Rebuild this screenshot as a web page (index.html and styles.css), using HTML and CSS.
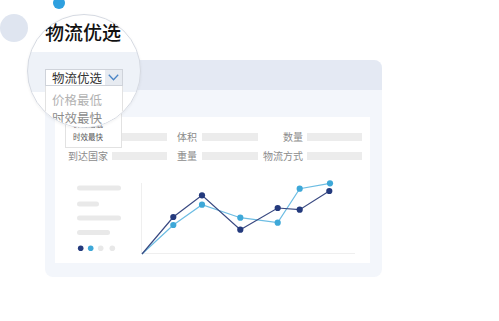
FILE: index.html
```html
<!DOCTYPE html>
<html lang="zh-CN">
<head>
    <meta charset="UTF-8">
    <meta name="viewport" content="width=device-width, initial-scale=1.0">
    <title>物流优选</title>
    <link rel="stylesheet" href="styles.css">
</head>
<body>
    <div class="scene">
        <span class="dot dot-blue"></span>
        <span class="dot dot-gray"></span>

        <div class="card">
            <div class="card-head"></div>
            <div class="card-body">
                <div class="panel">
                    <div class="form">
                        <span class="label"></span><span class="bar"></span>
                        <span class="label">体积</span><span class="bar bar-wide"></span>
                        <span class="label">数量</span><span class="bar"></span>

                        <span class="label">到达国家</span><span class="bar"></span>
                        <span class="label">重量</span><span class="bar bar-wide"></span>
                        <span class="label">物流方式</span><span class="bar"></span>
                    </div>

                    <svg class="chart" width="315" height="85" viewBox="55 175 315 85">
                        <!-- legend -->
                        <rect x="77" y="185.5" width="44" height="5" rx="2.5" fill="#e9e9e9"/>
                        <rect x="77" y="201.5" width="22" height="5" rx="2.5" fill="#e9e9e9"/>
                        <rect x="77" y="215.5" width="44" height="5" rx="2.5" fill="#e9e9e9"/>
                        <rect x="77" y="230" width="33" height="5" rx="2.5" fill="#e9e9e9"/>
                        <circle cx="80.7" cy="248.3" r="2.8" fill="#243a7d"/>
                        <circle cx="90.7" cy="248.3" r="2.8" fill="#3ea8d8"/>
                        <circle cx="100.7" cy="248.3" r="2.8" fill="#e8e8e8"/>
                        <circle cx="112.3" cy="248.3" r="2.8" fill="#e8e8e8"/>

                        <!-- axes -->
                        <line x1="141.5" y1="183" x2="141.5" y2="254" stroke="#efefef" stroke-width="1"/>
                        <line x1="141" y1="253.5" x2="355" y2="253.5" stroke="#efefef" stroke-width="1"/>

                        <!-- series -->
                        <polyline points="142,254 173.3,225 202,204.7 240.3,217.7 277.7,222.7 299.7,188.7 330,183.3"
                                  fill="none" stroke="#6dbde3" stroke-width="1.2"/>
                        <polyline points="142,254 173.3,217 202,195.3 240.3,229.7 277.7,208 299.7,209.7 329.3,191"
                                  fill="none" stroke="#3a4a82" stroke-width="1.2"/>
                        <g fill="#3ea8d8">
                            <circle cx="173.3" cy="225" r="3.1"/>
                            <circle cx="202" cy="204.7" r="3.1"/>
                            <circle cx="240.3" cy="217.7" r="3.1"/>
                            <circle cx="277.7" cy="222.7" r="3.1"/>
                            <circle cx="299.7" cy="188.7" r="3.1"/>
                            <circle cx="330" cy="183.3" r="3.1"/>
                        </g>
                        <g fill="#243a7d">
                            <circle cx="173.3" cy="217" r="3.1"/>
                            <circle cx="202" cy="195.3" r="3.1"/>
                            <circle cx="240.3" cy="229.7" r="3.1"/>
                            <circle cx="277.7" cy="208" r="3.1"/>
                            <circle cx="299.7" cy="209.7" r="3.1"/>
                            <circle cx="329.3" cy="191" r="3.1"/>
                        </g>
                    </svg>
                </div>
            </div>
        </div>

        <ul class="menu">
            <li>价格最低</li>
            <li>时效最快</li>
        </ul>

        <div class="lens">
            <h1 class="lens-title">物流优选</h1>
            <div class="select">
                <span class="select-text">物流优选</span>
                <span class="select-arrow">
                    <svg width="11" height="7" viewBox="0 0 11 7">
                        <polyline points="0.8,0.8 5.5,5.8 10.2,0.8" fill="none" stroke="#4a85c6" stroke-width="1.3"/>
                    </svg>
                </span>
            </div>
            <ul class="options">
                <li class="muted">价格最低</li>
                <li>时效最快</li>
            </ul>
        </div>
    </div>
</body>
</html>
```

FILE: styles.css
```css
* {
    margin: 0;
    padding: 0;
    box-sizing: border-box;
}

body {
    font-family: "Noto Sans CJK SC", "Noto Sans", sans-serif;
    background: #fff;
    width: 499px;
    height: 321px;
    overflow: hidden;
}

.scene {
    position: relative;
    width: 499px;
    height: 321px;
    padding: 60px 0 0 45px;
}

/* decorative dots */
.dot {
    position: absolute;
    border-radius: 50%;
}

.dot-blue {
    left: 53px;
    top: -3px;
    width: 12px;
    height: 12px;
    background: #2fa0df;
}

.dot-gray {
    left: 0;
    top: 14px;
    width: 28px;
    height: 28px;
    background: #dfe5f0;
}

/* window card */
.card {
    width: 337px;
    height: 217px;
    border-radius: 8px;
    overflow: hidden;
    background: #f3f6fb;
}

.card-head {
    height: 30px;
    background: #e4e9f3;
}

.card-body {
    padding: 27px 12px 14px 10px;
}

.panel {
    height: 146px;
    background: #fff;
    padding: 10px 0 0 13px;
}

.form {
    display: grid;
    grid-template-columns: 40px 59px 30px 61px 45px 59px;
    grid-auto-rows: 19px;
    align-items: center;
}

.label {
    font-size: 10px;
    line-height: 12px;
    color: #8c8c8c;
    white-space: nowrap;
    justify-self: end;
}

.label:nth-child(6n+1) {
    justify-self: start;
}

.bar {
    justify-self: end;
    width: 55px;
    height: 8px;
    background: #ececec;
}

.bar-wide {
    width: 56px;
}

.chart {
    display: block;
    margin: 10px 0 0 -13px;
}

/* small dropdown list */
.menu {
    position: absolute;
    left: 65px;
    top: 110px;
    width: 57px;
    height: 38px;
    list-style: none;
    background: #fff;
    border: 1px solid #e2e2e2;
    padding: 6px 0 0 7px;
}

.menu li {
    font-size: 7.5px;
    line-height: 13px;
    color: #555;
}

/* magnifier */
.lens {
    position: absolute;
    left: 27px;
    top: 14px;
    width: 114px;
    height: 114px;
    border-radius: 50%;
    border: 1px solid #d6dae2;
    overflow: hidden;
    background: linear-gradient(#fff 37px, #eef2f8 37px, #eef2f8 77px, #fff 77px);
    box-shadow: 0 1px 3px rgba(0, 0, 0, 0.06);
}

.lens-title {
    margin: 6px 0 0 17px;
    font-size: 19px;
    line-height: 22px;
    font-weight: 500;
    color: #111;
    white-space: nowrap;
}

.select {
    display: flex;
    width: 78px;
    height: 17px;
    margin: 26px 0 0 17px;
    background: #fff;
    border: 1px solid #cfd3da;
}

.select-text {
    flex: 1;
    padding-left: 6px;
    font-size: 12.5px;
    line-height: 15px;
    color: #333;
    white-space: nowrap;
}

.select-arrow {
    width: 17px;
    display: flex;
    align-items: center;
    justify-content: center;
    background: #e7ebf1;
}

.options {
    list-style: none;
    width: 78px;
    margin-left: 17px;
    height: 60px;
    background: #fff;
    border: 1px solid #e2e2e2;
    border-top: none;
    padding: 5px 0 0 6px;
}

.options li {
    font-size: 12.5px;
    line-height: 18px;
    color: #8c8c8c;
    white-space: nowrap;
}

.options .muted {
    color: #b2b2b2;
}
```
